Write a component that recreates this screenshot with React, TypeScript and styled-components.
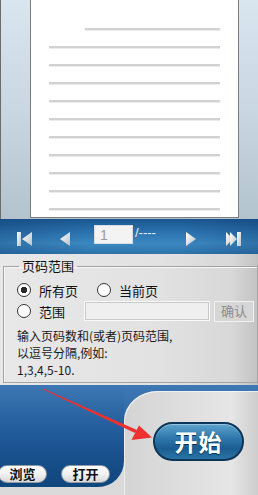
import React, { useState } from 'react';
import styled, { createGlobalStyle } from 'styled-components';

const GlobalStyle = createGlobalStyle`
  html, body {
    margin: 0;
    padding: 0;
    overflow: hidden;
  }
  body {
    font-family: "Noto Sans CJK SC", "Noto Sans", sans-serif;
  }
`;

const Window = styled.div`
  position: relative;
  width: 258px;
  height: 495px;
  display: flex;
  flex-direction: column;
  overflow: hidden;
`;

/* ---------- preview ---------- */

const Preview = styled.div`
  height: 219px;
  flex: none;
  box-sizing: border-box;
  padding-left: 29px;
  border-left: 1px solid #6c6c6c;
  background: linear-gradient(180deg, #d9e5ef 0%, #c9d7e2 50%, #b3c3ce 100%);
  display: flex;
`;

const Page = styled.div`
  width: 209px;
  height: 218px;
  box-sizing: border-box;
  background: #fff;
  border: 1px solid #7d7d7d;
  border-top: none;
  padding: 28px 18px 0 18px;
  display: flex;
  flex-direction: column;
  gap: 15px;
`;

const TextLine = styled.div<{ $indent?: number }>`
  height: 2px;
  margin-left: ${p => p.$indent ?? 0}px;
  background: #d2d2d2;
  border-bottom: 1px solid #ececec;
`;

/* ---------- navigation bar ---------- */

const NavBar = styled.div`
  height: 35px;
  flex: none;
  display: flex;
  align-items: center;
  background:
    linear-gradient(90deg, rgba(10, 50, 100, 0.25) 0%, rgba(255, 255, 255, 0) 35%, rgba(255, 255, 255, 0) 70%, rgba(10, 50, 100, 0.25) 100%),
    linear-gradient(180deg, #1b5690 0%, #2f78b4 45%, #3b88c0 70%, #2d72ab 100%);
`;

const NavIcon = styled.svg<{ $ml: number }>`
  display: block;
  margin-left: ${p => p.$ml}px;
  margin-top: 4px;
  flex: none;
`;

const PageInput = styled.input`
  margin-left: 24px;
  margin-top: -4px;
  width: 39px;
  height: 19px;
  box-sizing: border-box;
  border: 1px solid #d8dde2;
  background: #f3f3f3;
  color: #9a9a9a;
  font-family: "Liberation Sans", sans-serif;
  font-size: 14px;
  padding: 0 5px;
  outline: none;
`;

const PageTotal = styled.span`
  margin-left: 2px;
  margin-top: -9px;
  color: #e6eef5;
  font-family: "Liberation Sans", sans-serif;
  font-size: 13px;
  width: 40px;
`;

/* ---------- page range ---------- */

const RangeArea = styled.div`
  height: 131px;
  flex: none;
  box-sizing: border-box;
  padding: 4px 0 0 3px;
  background: linear-gradient(90deg, #e8e8e8 0%, #e2e2e2 60%, #d8d8d8 90%, #c2c2c2 100%);
`;

const GroupBox = styled.fieldset`
  margin: 0;
  padding: 0 0 0 13px;
  height: 125px;
  box-sizing: border-box;
  border: 1px solid #a3a3a3;
  box-shadow: inset 1px 1px 0 #f6f6f6;
  min-width: 0;
`;

const Legend = styled.legend`
  margin-left: 2px;
  padding: 0 3px;
  font-size: 13px;
  line-height: 16px;
  color: #111;
`;

const RadioRow = styled.div<{ $mt: number }>`
  display: flex;
  align-items: center;
  height: 20px;
  margin-top: ${p => p.$mt}px;
`;

const RadioLabel = styled.label<{ $w: number }>`
  display: flex;
  align-items: center;
  gap: 8px;
  width: ${p => p.$w}px;
  font-size: 13px;
  color: #111;
  cursor: pointer;
`;

const RadioDot = styled.span<{ $on: boolean }>`
  width: 14px;
  height: 14px;
  box-sizing: border-box;
  border-radius: 50%;
  border: 1px solid #333;
  background: ${p => (p.$on ? 'radial-gradient(circle, #2b2b2b 0 3px, #fff 3.5px)' : '#fff')};
  flex: none;
`;

const RangeInput = styled.input`
  width: 126px;
  height: 20px;
  box-sizing: border-box;
  margin-left: 0;
  border: 1px solid #fafafa;
  outline: 1px solid #c9c9c9;
  outline-offset: -2px;
  background: #efefef;
`;

const ConfirmButton = styled.button`
  margin-left: 4px;
  width: 40px;
  height: 21px;
  box-sizing: border-box;
  padding: 0;
  border: 1px solid #f2f2f2;
  background: #d6d6d6;
  color: #8c8c8c;
  font-family: "Noto Sans CJK SC", sans-serif;
  font-size: 13px;
  line-height: 18px;
`;

const Help = styled.p`
  margin: 6px 0 0 0;
  font-size: 12px;
  line-height: 17px;
  color: #1a1a1a;
`;

/* ---------- footer ---------- */

const Footer = styled.div`
  flex: 1;
  display: flex;
  background: #dadada;
`;

const LeftColumn = styled.div`
  width: 124px;
  flex: none;
  display: flex;
  flex-direction: column;
`;

const BluePanel = styled.div`
  flex: 1;
  margin-bottom: 8px;
  border-bottom-right-radius: 26px;
  background: linear-gradient(180deg, #3e78b4 0%, #2a64a2 30%, #1a5290 65%, #0f467c 100%);
  display: flex;
  align-items: flex-end;
  padding: 0 0 4px 0;
  box-sizing: border-box;
`;

const PillButton = styled.button<{ $ml: number; $w: number }>`
  margin-left: ${p => p.$ml}px;
  width: ${p => p.$w}px;
  height: 18px;
  padding: 0;
  border: 1px solid #8e9aa6;
  border-radius: 9px;
  background: linear-gradient(180deg, #ffffff 0%, #f1f1f1 50%, #d9d9d9 100%);
  color: #111;
  font-family: "Noto Sans CJK SC", sans-serif;
  font-weight: 700;
  font-size: 13px;
  line-height: 16px;
`;

const RightColumn = styled.div`
  flex: 1;
  display: flex;
  background: linear-gradient(180deg, #3e78b4 0%, #2a64a2 40%, #1a5290 100%);
`;

const GrayPanel = styled.div`
  flex: 1;
  margin-top: 6px;
  border-top-left-radius: 34px 30px;
  background: linear-gradient(90deg, #d4d4d4 0%, #dedede 45%, #e6e6e6 80%, #cdcdcd 100%);
  box-shadow: inset 1px 1px 0 rgba(255, 255, 255, 0.6);
  padding: 31px 0 0 29px;
  box-sizing: border-box;
`;

const StartButton = styled.button`
  width: 91px;
  height: 39px;
  padding: 0 0 2px 0;
  border: 2px solid #0c3558;
  border-radius: 20px;
  background: linear-gradient(180deg, #5ea3cf 0%, #2f78ac 40%, #1c5d90 70%, #2a74a8 100%);
  color: #fff;
  font-family: "Noto Sans CJK SC", sans-serif;
  font-weight: 700;
  font-size: 23px;
  letter-spacing: 1px;
  text-shadow: 0 1px 1px #0b3050;
  box-shadow: inset 0 1px 0 rgba(255, 255, 255, 0.35);
`;

const Arrow = styled.svg`
  position: absolute;
  left: 0;
  top: 0;
  pointer-events: none;
`;

const IconGrad = () => (
  <defs>
    <linearGradient id="ig" x1="0" y1="0" x2="1" y2="1">
      <stop offset="0" stopColor="#ffffff" />
      <stop offset="1" stopColor="#b9c2ca" />
    </linearGradient>
  </defs>
);

export default function App() {
  const [mode, setMode] = useState<'all' | 'current' | 'range'>('all');
  const lines = [36, 0, 0, 0, 0, 0, 0, 0, 0, 0, 0];

  return (
    <Window>
      <GlobalStyle />
      <Preview>
        <Page>
          {lines.map((indent, i) => (
            <TextLine key={i} $indent={indent} />
          ))}
        </Page>
      </Preview>

      <NavBar>
        <NavIcon $ml={17} width="15" height="14" viewBox="0 0 15 14">
          <IconGrad />
          <rect x="0" y="0" width="4" height="14" fill="url(#ig)" />
          <path d="M5 7 L15 0 L15 14 Z" fill="url(#ig)" />
        </NavIcon>
        <NavIcon $ml={28} width="10" height="14" viewBox="0 0 10 14">
          <IconGrad />
          <path d="M0 7 L10 0 L10 14 Z" fill="url(#ig)" />
        </NavIcon>
        <PageInput defaultValue="1" />
        <PageTotal>/----</PageTotal>
        <NavIcon $ml={11} width="10" height="14" viewBox="0 0 10 14">
          <IconGrad />
          <path d="M0 0 L10 7 L0 14 Z" fill="url(#ig)" />
        </NavIcon>
        <NavIcon $ml={30} width="15" height="14" viewBox="0 0 15 14">
          <IconGrad />
          <path d="M0 0 L7 7 L0 14 Z" fill="url(#ig)" />
          <path d="M4 0 L11 7 L4 14 Z" fill="url(#ig)" />
          <rect x="11" y="0" width="4" height="14" fill="url(#ig)" />
        </NavIcon>
      </NavBar>

      <RangeArea>
        <GroupBox>
          <Legend>页码范围</Legend>
          <RadioRow $mt={6}>
            <RadioLabel $w={80} onClick={() => setMode('all')}>
              <RadioDot $on={mode === 'all'} />
              所有页
            </RadioLabel>
            <RadioLabel $w={80} onClick={() => setMode('current')}>
              <RadioDot $on={mode === 'current'} />
              当前页
            </RadioLabel>
          </RadioRow>
          <RadioRow $mt={1}>
            <RadioLabel $w={67} onClick={() => setMode('range')}>
              <RadioDot $on={mode === 'range'} />
              范围
            </RadioLabel>
            <RangeInput disabled={mode !== 'range'} />
            <ConfirmButton disabled={mode !== 'range'}>确认</ConfirmButton>
          </RadioRow>
          <Help>
            输入页码数和(或者)页码范围,
            <br />
            以逗号分隔,例如:
            <br />
            1,3,4,5-10.
          </Help>
        </GroupBox>
      </RangeArea>

      <Footer>
        <LeftColumn>
          <BluePanel>
            <PillButton $ml={-2} $w={49}>浏览</PillButton>
            <PillButton $ml={14} $w={49}>打开</PillButton>
          </BluePanel>
        </LeftColumn>
        <RightColumn>
          <GrayPanel>
            <StartButton>开始</StartButton>
          </GrayPanel>
        </RightColumn>
      </Footer>

      <Arrow width="258" height="495" viewBox="0 0 258 495">
        <path d="M43 388.5 L137 430 L135 433 L43 389.5 Z" fill="#ee3030" />
        <path d="M152 437.5 L139 425.5 L131.5 440 Z" fill="#ee3030" />
      </Arrow>
    </Window>
  );
}
